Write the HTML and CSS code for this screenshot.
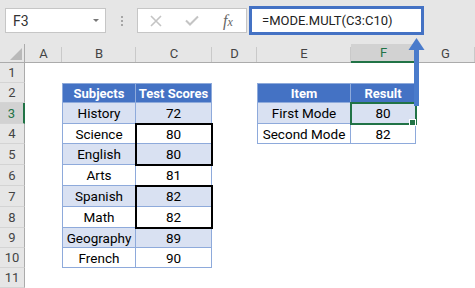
FILE: index.html
```html
<!DOCTYPE HTML>
<html>
<head>
  <title>MODE.MULT</title>
  <meta name="viewport" content="width=device-width, initial-scale=1">
  <link rel="stylesheet" href="styles.css">
</head>
<body>

  <div class="toolbar">
    <div class="namebox"><span>F3</span><span class="caret"></span></div>
    <div class="grip"><i></i><i></i><i></i></div>
    <div class="fx-buttons">
      <span class="btn">
        <svg width="12" height="12" viewBox="0 0 12 12"><path d="M1 1 L11 11 M11 1 L1 11" stroke="#c4c4c4" stroke-width="1.6" fill="none"/></svg>
      </span>
      <span class="btn">
        <svg width="14" height="11" viewBox="0 0 14 11"><path d="M1 5.5 L5 9.5 L13 1.5" stroke="#c4c4c4" stroke-width="2" fill="none"/></svg>
      </span>
      <span class="btn fx"><i>f</i><i class="sub">x</i></span>
    </div>
    <div class="formula">=MODE.MULT(C3:C10)</div>
  </div>

  <div class="sheet">
    <div class="cells">
      <!-- column headers -->
      <div class="corner"><span class="tri"></span></div>
      <div class="ch">A</div>
      <div class="ch">B</div>
      <div class="ch">C</div>
      <div class="ch">D</div>
      <div class="ch">E</div>
      <div class="ch on">F</div>
      <div class="ch">G</div>

      <!-- 1 -->
      <div class="rh">1</div>
      <div></div><div></div><div></div><div></div><div></div><div></div><div></div>

      <!-- 2 -->
      <div class="rh">2</div>
      <div></div>
      <div class="c t l th">Subjects</div>
      <div class="c t th">Test Scores</div>
      <div></div>
      <div class="c t l th">Item</div>
      <div class="c t th">Result</div>
      <div></div>

      <!-- 3 -->
      <div class="rh on">3</div>
      <div></div>
      <div class="c t l alt">History</div>
      <div class="c t alt">72</div>
      <div></div>
      <div class="c t l alt">First Mode</div>
      <div class="c t alt">80</div>
      <div></div>

      <!-- 4 -->
      <div class="rh">4</div>
      <div></div>
      <div class="c t l">Science</div>
      <div class="c t">80</div>
      <div></div>
      <div class="c t l">Second Mode</div>
      <div class="c t">82</div>
      <div></div>

      <!-- 5 -->
      <div class="rh">5</div>
      <div></div>
      <div class="c t l alt">English</div>
      <div class="c t alt">80</div>
      <div></div><div></div><div></div><div></div>

      <!-- 6 -->
      <div class="rh">6</div>
      <div></div>
      <div class="c t l">Arts</div>
      <div class="c t">81</div>
      <div></div><div></div><div></div><div></div>

      <!-- 7 -->
      <div class="rh">7</div>
      <div></div>
      <div class="c t l alt">Spanish</div>
      <div class="c t alt">82</div>
      <div></div><div></div><div></div><div></div>

      <!-- 8 -->
      <div class="rh">8</div>
      <div></div>
      <div class="c t l">Math</div>
      <div class="c t">82</div>
      <div></div><div></div><div></div><div></div>

      <!-- 9 -->
      <div class="rh">9</div>
      <div></div>
      <div class="c t l alt">Geography</div>
      <div class="c t alt">89</div>
      <div></div><div></div><div></div><div></div>

      <!-- 10 -->
      <div class="rh">10</div>
      <div></div>
      <div class="c t l">French</div>
      <div class="c t">90</div>
      <div></div><div></div><div></div><div></div>

      <!-- 11 -->
      <div class="rh">11</div>
      <div></div><div></div><div></div><div></div><div></div><div></div><div></div>
    </div>

    <!-- borders and selection drawn over the cells -->
    <div class="marks">
      <div class="box box-a"></div>
      <div class="box box-b"></div>
      <div class="sel"></div>
    </div>
  </div>

  <svg class="arrow" width="20" height="72" viewBox="0 0 20 72">
    <polygon points="2.5,15 10.5,3 18.5,15" fill="#4a7bcb"/>
    <rect x="8" y="14" width="5" height="57" fill="#4a7bcb"/>
  </svg>

</body>
</html>
```

FILE: styles.css
```css
body {
  margin: 0;
  width: 475px;
  height: 288px;
  overflow: hidden;
  position: relative;
  background-color: #fff;
  font-family: Roboto, "Liberation Sans", sans-serif;
}

/* formula bar */
.toolbar {
  height: 44px;
  box-sizing: border-box;
  padding: 6px 0 0 5px;
  background-color: #e6e6e6;
  display: flex;
  align-items: flex-start;
}

.namebox {
  margin-top: 2px;
  width: 101px;
  height: 25px;
  box-sizing: border-box;
  border: 1px solid #c6c6c6;
  background-color: #fff;
  padding: 0 6px 0 7px;
  display: flex;
  align-items: center;
  justify-content: space-between;
  font-size: 14px;
  color: #333;
}

.caret {
  width: 0;
  height: 0;
  border-left: 3.5px solid transparent;
  border-right: 3.5px solid transparent;
  border-top: 3px solid #777;
}

.grip {
  margin-top: 2px;
  width: 31px;
  height: 25px;
  display: flex;
  flex-direction: column;
  align-items: center;
  justify-content: center;
  gap: 2px;
}

.grip i {
  width: 2px;
  height: 2px;
  background-color: #a6a6a6;
}

.fx-buttons {
  margin-top: 2px;
  width: 110px;
  height: 25px;
  box-sizing: border-box;
  border: 1px solid #c6c6c6;
  background-color: #fff;
  display: flex;
  align-items: center;
}

.btn {
  width: 36px;
  display: flex;
  justify-content: center;
  align-items: center;
}

.fx {
  font-family: "Liberation Serif", serif;
  color: #666;
  font-size: 16px;
}

.fx .sub {
  font-size: 12px;
  margin-top: 4px;
}

.formula {
  margin-left: 2px;
  width: 175px;
  height: 29px;
  box-sizing: border-box;
  border: 3px solid #4472c4;
  background-color: #fff;
  padding-left: 10px;
  font-size: 13px;
  line-height: 23px;
  color: #222;
}

/* worksheet */
.sheet {
  display: grid;
}

.cells,
.marks {
  grid-area: 1 / 1;
  display: grid;
  grid-template-columns: 25px 37px 74px 76px 45px 94px 65px 59px;
  grid-template-rows: 19px 20px 20px 21px 20px 21px 21px 21px 21px 20px 20px 20px;
}

.corner {
  background-color: #e6e6e6;
  border-right: 1px solid #ababab;
  border-bottom: 1px solid #ababab;
  display: flex;
  align-items: flex-end;
  justify-content: flex-end;
  padding: 0 2px 2px 0;
}

.tri {
  width: 0;
  height: 0;
  border-left: 12px solid transparent;
  border-bottom: 12px solid #b9b9b9;
}

.ch {
  background: linear-gradient(#c9c9c9, #c9c9c9) right 3px / 1px calc(100% - 3px) no-repeat, #e6e6e6;
  border-bottom: 1px solid #ababab;
  display: flex;
  align-items: center;
  justify-content: center;
  font-size: 13px;
  color: #444;
}

.rh {
  background-color: #e6e6e6;
  border-right: 1px solid #ababab;
  border-bottom: 1px solid #d4d4d4;
  display: flex;
  align-items: center;
  justify-content: center;
  font-size: 13px;
  color: #444;
}

.ch.on {
  background-color: #d2d2d2;
  border-bottom: 2px solid #217346;
  color: #217346;
}

.rh.on {
  background-color: #d2d2d2;
  border-right: 2px solid #217346;
  color: #217346;
}

.c {
  display: flex;
  align-items: center;
  justify-content: center;
  box-sizing: border-box;
  font-size: 13.5px;
  color: #000;
}

.t {
  border-right: 1px solid #8eaadb;
  border-bottom: 1px solid #8eaadb;
}

.t.l {
  border-left: 1px solid #8eaadb;
}

.th {
  background-color: #4472c4;
  color: #fff;
  font-weight: bold;
  font-size: 13px;
  border-top: 1px solid #8eaadb;
}

.alt {
  background-color: #d9e1f2;
}

.box {
  grid-column: 4;
  margin: -1px;
  border: 2px solid #000;
}

.box-a {
  grid-row: 5 / 7;
}

.box-b {
  grid-row: 8 / 10;
}

.sel {
  grid-area: 4 / 7 / 5 / 8;
  margin: -1px;
  border: 2px solid #217346;
  position: relative;
}

.sel::after {
  content: "";
  position: absolute;
  right: -1px;
  bottom: -3px;
  width: 5px;
  height: 5px;
  background-color: #217346;
  border: 1px solid #fff;
}

.arrow {
  position: absolute;
  left: 406px;
  top: 35px;
}
```
